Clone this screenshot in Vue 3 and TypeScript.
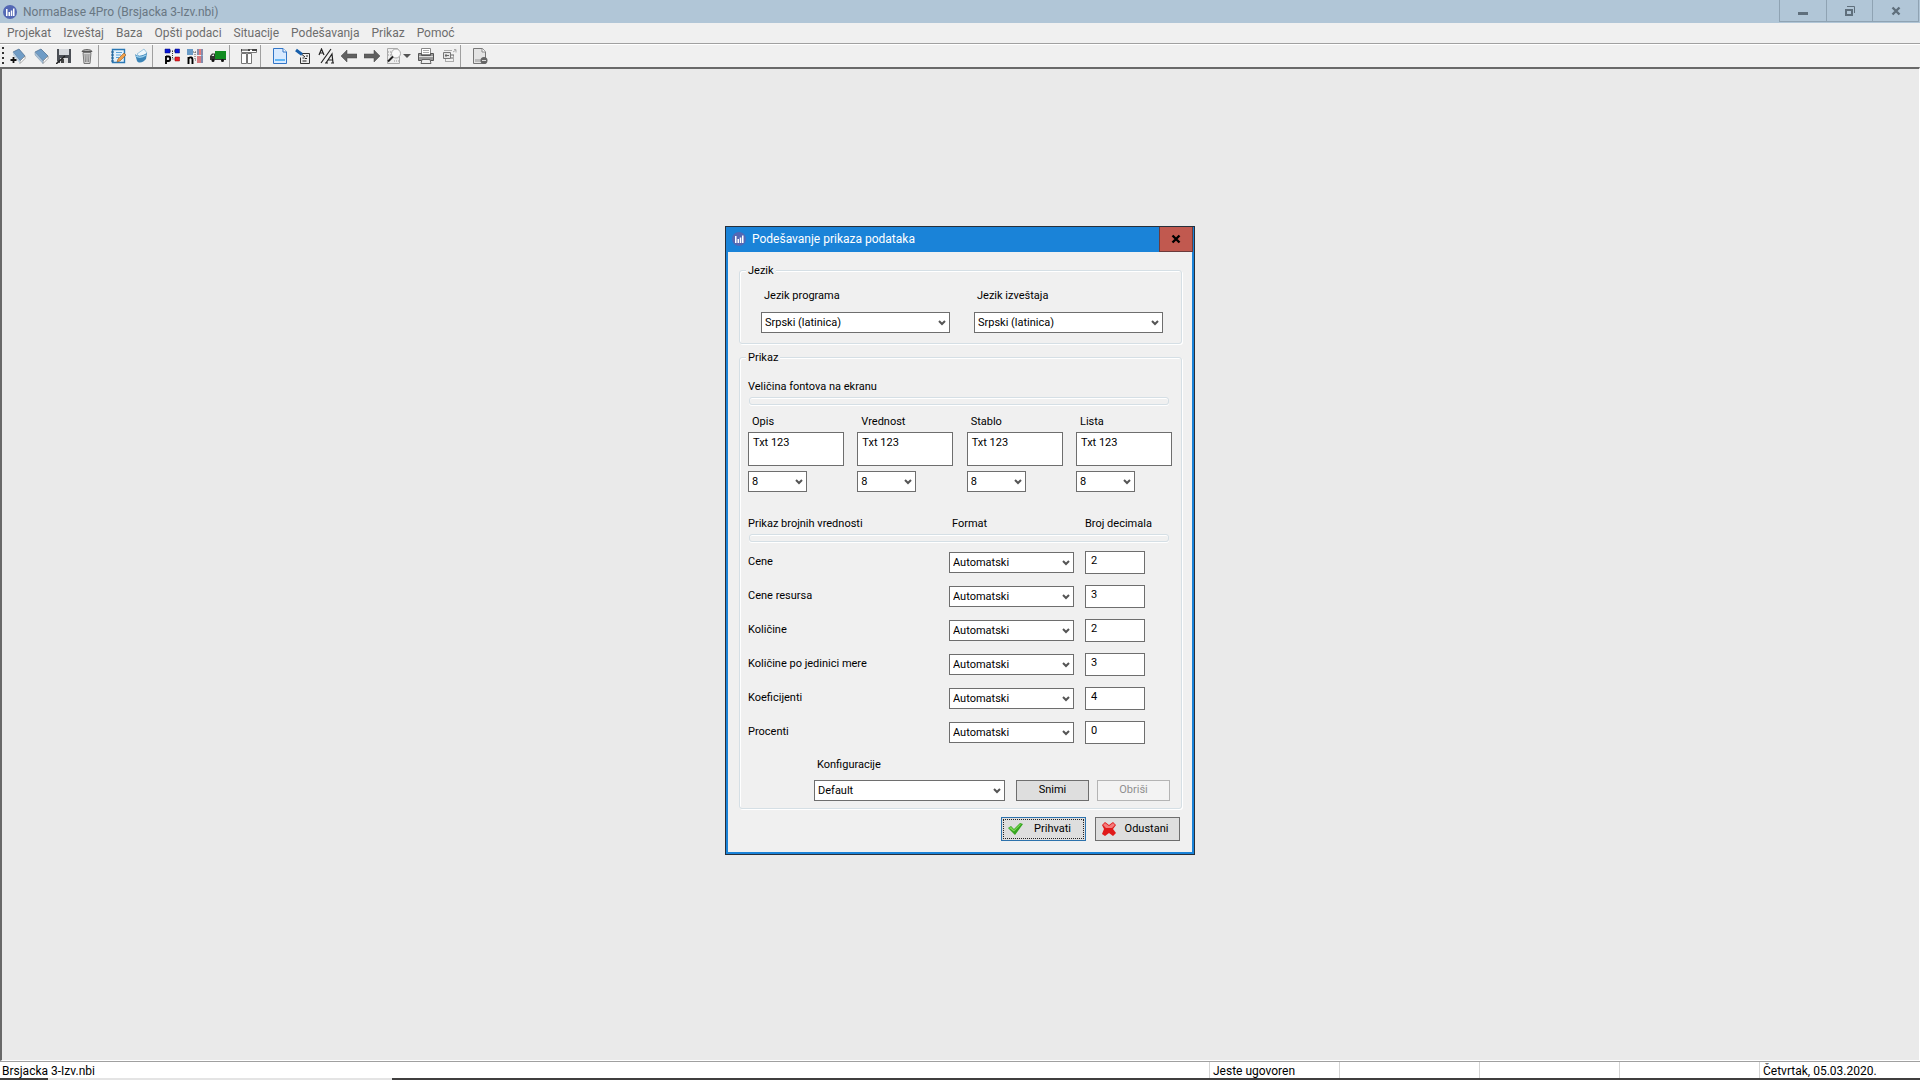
<script setup lang="ts">
import { ref } from 'vue'

interface FontSample { id: string; label: string; text: string; size: string }
interface NumberRow { id: string; label: string; format: string; decimals: string }

const menus: string[] = ['Projekat', 'Izveštaj', 'Baza', 'Opšti podaci', 'Situacije', 'Podešavanja', 'Prikaz', 'Pomoć']

const languages: string[] = ['Srpski (latinica)']
const programLanguage = ref('Srpski (latinica)')
const reportLanguage = ref('Srpski (latinica)')

const fonts = ref<FontSample[]>([
  { id: 'opis', label: 'Opis', text: 'Txt 123', size: '8' },
  { id: 'vrednost', label: 'Vrednost', text: 'Txt 123', size: '8' },
  { id: 'stablo', label: 'Stablo', text: 'Txt 123', size: '8' },
  { id: 'lista', label: 'Lista', text: 'Txt 123', size: '8' },
])

const rows = ref<NumberRow[]>([
  { id: 'cene', label: 'Cene', format: 'Automatski', decimals: '2' },
  { id: 'resursi', label: 'Cene resursa', format: 'Automatski', decimals: '3' },
  { id: 'kolicine', label: 'Količine', format: 'Automatski', decimals: '2' },
  { id: 'jedinica', label: 'Količine po jedinici mere', format: 'Automatski', decimals: '3' },
  { id: 'koeficijenti', label: 'Koeficijenti', format: 'Automatski', decimals: '4' },
  { id: 'procenti', label: 'Procenti', format: 'Automatski', decimals: '0' },
])

const configuration = ref('Default')
</script>

<template>
  <div class="app">
    <header class="titlebar">
      <svg class="logo" viewBox="0 0 14 14"><circle cx="7" cy="7" r="7" fill="#5468b4" /><path d="M3 4h1.500v7H3zM5.500 7H7v4H5.500zM7.800 5.500h1.500V11H7.800zM10 3.500h1.500V11H10z" fill="#fff" /></svg>
      <h1>NormaBase 4Pro (Brsjacka 3-Izv.nbi)</h1>
      <div class="controls">
        <button type="button" aria-label="Minimize"><svg viewBox="0 0 12 12"><path d="M1 7h10v3H1z" fill="#5f6f7c" /></svg></button>
        <button type="button" aria-label="Restore"><svg viewBox="0 0 12 12"><path d="M2 5h6v5H2z" fill="none" stroke="#5f6f7c" stroke-width="2" /><path d="M3 1.500h7.500V8" fill="none" stroke="#5f6f7c" /></svg></button>
        <button type="button" aria-label="Close"><svg viewBox="0 0 12 12"><path d="M2.500 2.500l7 7M9.500 2.500l-7 7" stroke="#5f6f7c" stroke-width="2.400" /></svg></button>
      </div>
    </header>

    <nav class="menubar">
      <a v-for="m in menus" :key="m" href="#">{{ m }}</a>
    </nav>

    <div class="toolbar">
      <span class="grip"></span>
      <button type="button" aria-label="Novi projekat"><svg viewBox="0 0 16 16"><path d="M3 4l6-3 6 7-5 5z" fill="#6f9cc6" stroke="#46698c" stroke-width=".7" /><path d="M10 13l5-5v2.500l-5 5z" fill="#fff" stroke="#777" stroke-width=".6" /><path d="M3 4l7 9v2.500L3 7z" fill="#b9cfe2" /><path d="M3.500 9v6M.5 12h6" stroke="#111" stroke-width="1.800" /></svg></button>
      <button type="button" aria-label="Otvori projekat"><svg viewBox="0 0 16 16"><path d="M2 4l6-3 7 7-5 5z" fill="#6f9cc6" stroke="#46698c" stroke-width=".7" /><path d="M10 13l5-5v2.500l-5 5z" fill="#fff" stroke="#777" stroke-width=".6" /><path d="M2 4l8 9v2.500L2 7z" fill="#a9c3db" stroke="#7890a8" stroke-width=".5" /></svg></button>
      <button type="button" aria-label="Snimi projekat"><svg viewBox="0 0 16 16"><path d="M1 1h14v14H3l-2-2z" fill="#4b4f55" /><path d="M3 1h10v6H3z" fill="#d5d8dc" /><path d="M4 10h8v5H4z" fill="#dedede" /><path d="M5 11h3v4H5z" fill="#444" /><path d="M0 16l9-8" stroke="#222" stroke-width="1.500" /></svg></button>
      <button type="button" aria-label="Obriši projekat"><svg viewBox="0 0 16 16"><path d="M4 4.500h8l-1 11H5z" fill="#d4d4d4" stroke="#777" /><path d="M3 3.500C3.500 1 12.500 1 13 3.500z" fill="#bbb" stroke="#555" /><path d="M6 6l.5 8M8 6v8M10 6l-.5 8" stroke="#888" /></svg></button>
      <span class="sep"></span>
      <button type="button" aria-label="Beleške"><svg viewBox="0 0 16 16"><path d="M2.500 1.500h12v13h-12z" fill="#e3f1fb" stroke="#2a78b5" stroke-width="1.400" /><path d="M1 4h3M1 7h3M1 10h3M1 13h3" stroke="#225d8d" /><path d="M6 4.500h6M6 7h5M6 9.500h3" stroke="#5aa2d8" /><path d="M7 14l1-3 6-6 2 2-6 6z" fill="#f0a04c" stroke="#925b26" stroke-width=".6" /></svg></button>
      <button type="button" aria-label="Baza"><svg viewBox="0 0 16 16"><path d="M4 6l7-5 3 4-6 5z" fill="#eef7fc" stroke="#8bbbd9" stroke-width=".8" /><path d="M2 6c3 3 7 2 12-1l-1 6c-2 3-7 5-9 2z" fill="#3c85b8" /><path d="M3 8c3 2 7 1 10-1" fill="none" stroke="#9bd0ee" stroke-width="1.500" /></svg></button>
      <span class="sep"></span>
      <button type="button" aria-label="Pozicije"><svg viewBox="0 0 16 16"><path d="M1 1h5v4H1zM11 1h4.500v4H11z" fill="#0a18d8" stroke="#050b70" stroke-width=".5" /><path d="M6 3h5M8.500 3v8H11" fill="none" stroke="#333" stroke-dasharray="1 1" /><path d="M11 9h4.500v4H11z" fill="#ed1c24" stroke="#800" stroke-width=".5" /><path d="M2 16V8M2 8.500h2.500a1.500 2 0 0 1 0 4.500H2" fill="none" stroke="#000" stroke-width="1.900" /></svg></button>
      <button type="button" aria-label="Normativi"><svg viewBox="0 0 16 16"><path d="M0 1h6v6H0z" fill="#699bc7" /><path d="M10 1h6v6h-6z" fill="#e77a78" /><path d="M10 8h6v7h-6z" fill="#d77b80" /><path d="M11 1v6M15 1v14" stroke="#6793bd" stroke-width="1.500" /><path d="M6 4h4M8 4v8h2" fill="none" stroke="#555" stroke-dasharray="1 1" /><path d="M1.500 16V9M1.500 10.500c2-2 4-1 4 1V16" fill="none" stroke="#000" stroke-width="1.900" /></svg></button>
      <button type="button" aria-label="Transport"><svg viewBox="0 0 16 16"><path d="M5 3h11v8H5z" fill="#118b20" /><path d="M0 8l2-2.500h3V12H0z" fill="#333" /><path d="M5 11h11v1H5z" fill="#333" /><circle cx="3" cy="12.500" r="1.500" fill="#111" /><circle cx="12.500" cy="12.500" r="1.500" fill="#111" /><path d="M1.500 8L3 6.500h1V8z" fill="#eee" /></svg></button>
      <span class="sep"></span>
      <button type="button" aria-label="Raspored"><svg viewBox="0 0 16 16"><path d="M.5 1.500h15v3H.5zM.5 5.500h5v10h-5zM6.500 5.500h4v10h-4z" fill="#fff" stroke="#777" /><path d="M0 1h9v2H0zM11 1h5v2h-5z" fill="#444" /><path d="M1 2h6" stroke="#ddd" /></svg></button>
      <span class="sep"></span>
      <button type="button" aria-label="Dokument"><svg viewBox="0 0 16 16"><path d="M1.500.5H11L14.500 4v11.500h-13z" fill="#d8eaff" stroke="#3175c7" /><path d="M11 .5V4h3.500" fill="#fff" stroke="#3175c7" /><path d="M3 11h10v2H3z" fill="#61b6f5" /></svg></button>
      <button type="button" aria-label="Izmeni"><svg viewBox="0 0 16 16"><path d="M6.500 5.500h8v10h-9v-6" fill="#eee" stroke="#333" /><path d="M7.500 10h2M7.500 13h4M11 8h2M10 10.500h2" stroke="#222" /><path d="M1 2l6 4.500" stroke="#175eaa" stroke-width="3" /><path d="M7 6.500l3 2.500" stroke="#222" /></svg></button>
      <button type="button" aria-label="Font"><svg viewBox="0 0 16 16"><path d="M1 7l2.500-6L6 7M2 5h3M3 15L13 1M8 15l6-9 1 9M10.500 12H15M7 15h3M13 15h3" fill="none" stroke="#222" stroke-width="1.200" /></svg></button>
      <button type="button" aria-label="Nazad"><svg viewBox="0 0 16 16"><path d="M0 8l6-6v4h10v4H6v4z" fill="#606060" stroke="#444" stroke-width=".5" /></svg></button>
      <button type="button" aria-label="Napred"><svg viewBox="0 0 16 16"><path d="M16 8l-6-6v4H0v4h10v4z" fill="#606060" stroke="#444" stroke-width=".5" /></svg></button>
      <button type="button" class="wide" aria-label="Pregled"><svg viewBox="0 0 16 16"><path d="M1.500.5h10l2 3v12h-12z" fill="#eee" stroke="#aaa" /><path d="M2 4h3M2 7h3M8 13h5" stroke="#999" stroke-dasharray="1 1" /><circle cx="10" cy="5.500" r="4.500" fill="#fafafa" stroke="#aaa" /><path d="M7 8.500L2 13.500" stroke="#222" stroke-width="2" /></svg><svg class="drop" viewBox="0 0 8 4"><path d="M0 0h8L4 4z" fill="#555" /></svg></button>
      <button type="button" aria-label="Štampaj"><svg viewBox="0 0 16 16"><path d="M3.500.5h9v6h-9z" fill="#fff" stroke="#888" /><path d="M5 2.500h6M5 4.500h6" stroke="#aaa" /><path d="M.5 5.500h3v2h9v-2h3v7H.5z" fill="#999" stroke="#555" /><path d="M1 8.500h14" stroke="#ddd" /><path d="M4 11.500h8l1 4H3z" fill="#eee" stroke="#666" /></svg></button>
      <button type="button" aria-label="Izvoz"><svg viewBox="0 0 16 16"><path d="M3 2.500h8M4 13.500h9M12.500 7v6M4.500 11v2M12 4l3-2M13 1.500h2v3" fill="none" stroke="#aaa" /><path d="M2.500 4.500h7v6h-7z" fill="#e4e4e4" stroke="#777" /><path d="M4 7.500h4M5 6v3M10 7h3M10 10h2" stroke="#666" /></svg></button>
      <span class="sep"></span>
      <button type="button" aria-label="Svojstva"><svg viewBox="0 0 16 16"><path d="M1.500.5h9L13.500 4v11.500h-12z" fill="#e4e4e4" stroke="#777" /><path d="M10 .5V4h3.500" fill="#fff" stroke="#888" /><path d="M3 11h8v3H3z" fill="#bbb" /><circle cx="12" cy="12.500" r="3.500" fill="#666" /><path d="M10 12.500h4" stroke="#ddd" /></svg></button>
    </div>

    <main class="workspace"></main>

    <footer class="statusbar">
      <span class="file">Brsjacka 3-Izv.nbi</span>
      <span class="cell state">Jeste ugovoren</span>
      <span class="cell"></span>
      <span class="cell"></span>
      <span class="cell"></span>
      <span class="cell date">Četvrtak, 05.03.2020.</span>
    </footer>
    <div class="edge"><span></span></div>

    <div class="overlay">
      <form class="dialog" role="dialog" aria-labelledby="dialog-title" @submit.prevent>
        <div class="caption">
          <svg class="logo" viewBox="0 0 14 14"><circle cx="7" cy="7" r="7" fill="#5468b4" /><path d="M3 4h1.500v7H3zM5.500 7H7v4H5.500zM7.800 5.500h1.500V11H7.800zM10 3.500h1.500V11H10z" fill="#fff" /></svg>
          <h2 id="dialog-title">Podešavanje prikaza podataka</h2>
          <button type="button" aria-label="Zatvori"><svg viewBox="0 0 10 10"><path d="M1.500 1.500l7 7M8.500 1.500l-7 7" stroke="#000" stroke-width="2.400" /></svg></button>
        </div>

        <div class="body">
          <fieldset class="language">
            <legend>Jezik</legend>
            <div class="field">
              <label for="program-language">Jezik programa</label>
              <span class="combo">
                <select id="program-language" v-model="programLanguage"><option v-for="l in languages" :key="l">{{ l }}</option></select>
                <svg viewBox="0 0 8 6"><path d="M1 1l3 3 3-3" /></svg>
              </span>
            </div>
            <div class="field">
              <label for="report-language">Jezik izveštaja</label>
              <span class="combo">
                <select id="report-language" v-model="reportLanguage"><option v-for="l in languages" :key="l">{{ l }}</option></select>
                <svg viewBox="0 0 8 6"><path d="M1 1l3 3 3-3" /></svg>
              </span>
            </div>
          </fieldset>

          <fieldset class="display">
            <legend>Prikaz</legend>
            <p>Veličina fontova na ekranu</p>
            <div class="rule"></div>

            <div class="fonts">
              <div v-for="f in fonts" :key="f.id" class="font">
                <label :for="f.id">{{ f.label }}</label>
                <textarea :id="f.id" v-model="f.text"></textarea>
                <span class="combo">
                  <select v-model="f.size" :aria-label="f.label"><option>8</option></select>
                  <svg viewBox="0 0 8 6"><path d="M1 1l3 3 3-3" /></svg>
                </span>
              </div>
            </div>

            <div class="numbers head">
              <span>Prikaz brojnih vrednosti</span>
              <span class="format">Format</span>
              <span>Broj decimala</span>
            </div>
            <div class="rule"></div>

            <div class="rows">
              <div v-for="r in rows" :key="r.id" class="numbers">
                <label :for="r.id">{{ r.label }}</label>
                <span class="combo">
                  <select :id="r.id" v-model="r.format"><option>Automatski</option></select>
                  <svg viewBox="0 0 8 6"><path d="M1 1l3 3 3-3" /></svg>
                </span>
                <input v-model="r.decimals" type="text" :aria-label="r.label + ' – broj decimala'">
              </div>
            </div>

            <div class="config">
              <div class="field">
                <label for="configuration">Konfiguracije</label>
                <span class="combo">
                  <select id="configuration" v-model="configuration"><option>Default</option></select>
                  <svg viewBox="0 0 8 6"><path d="M1 1l3 3 3-3" /></svg>
                </span>
              </div>
              <button type="button" class="push">Snimi</button>
              <button type="button" class="push" disabled>Obriši</button>
            </div>
          </fieldset>

          <div class="actions">
            <button type="submit" class="push action default">
              <svg viewBox="0 0 16 16"><path d="M1 7l3-2 3 3 6-6 3 1-8 11z" fill="#35a51f" /><path d="M2 7l2-1 3 3 6-6 1 .5-7 7z" fill="#7ed957" /></svg>
              <span>Prihvati</span>
            </button>
            <button type="button" class="push action">
              <svg viewBox="0 0 16 16"><path d="M1 4l3-3 4 3 4-3 3 3-3 4 3 4-3 3-4-3-4 3-3-2 2-5z" fill="#e01919" /><path d="M2 4l2-2 4 3 4-3 2 2-3 3H5z" fill="#f47b7b" /></svg>
              <span>Odustani</span>
            </button>
          </div>
        </div>
      </form>
    </div>
  </div>
</template>

<style>
body {
  margin: 0;
}
</style>

<style scoped>
.app {
  position: relative;
  display: flex;
  flex-direction: column;
  min-height: 100vh;
  background: #f0f0f0;
  font: 12px/16px Roboto, "Noto Sans", sans-serif;
  color: #000;
}

button, select, input, textarea {
  box-sizing: border-box;
  margin: 0;
  border-radius: 0;
  font: inherit;
  color: inherit;
}

.logo {
  width: 14px;
  height: 14px;
}

.titlebar {
  display: flex;
  align-items: center;
  height: 23px;
  padding-left: 3px;
  background: #b1c6d7;
}

h1, h2, p {
  margin: 0;
  font-size: inherit;
  font-weight: 400;
}

h1 {
  flex: 1;
  padding-left: 6px;
  color: #697783;
}

.controls {
  display: flex;
  align-self: flex-start;
  height: 21px;
  margin-right: 1px;
  border: solid #8fa3b3;
  border-width: 0 1px 1px;
}

.controls button {
  display: grid;
  place-items: center;
  width: 46px;
  padding: 0;
  border: 0;
  background: none;
}

.controls button + button {
  border-left: 1px solid #8fa3b3;
}

.controls svg {
  width: 12px;
  height: 12px;
}

.menubar {
  display: flex;
  gap: 12px;
  height: 20px;
  align-items: center;
  padding-left: 7px;
  border-bottom: 1px solid #a0a0a0;
  box-shadow: 0 1px #fff;
}

.menubar a {
  color: #6d6d6d;
  text-decoration: none;
}

.toolbar {
  display: flex;
  align-items: center;
  height: 23px;
}

.grip {
  width: 2px;
  height: 17px;
  margin: 0 2px;
  background: repeating-linear-gradient(#333 0 2px, transparent 2px 5px);
}

.toolbar button {
  display: flex;
  align-items: center;
  justify-content: center;
  width: 23px;
  height: 22px;
  padding: 0;
  border: 0;
  background: none;
}

.toolbar svg {
  flex: none;
  width: 16px;
  height: 16px;
}

.toolbar .wide {
  width: 31px;
  gap: 1px;
}

.toolbar .drop {
  width: 8px;
  height: 4px;
}

.sep {
  box-sizing: border-box;
  width: 8px;
  height: 22px;
  border-left: 1px solid #a0a0a0;
}

.workspace {
  flex: 1;
  border-style: solid;
  border-width: 2px 1px 1px 2px;
  border-color: #696969 #fff #fff #696969;
  background: #eaeaea;
}

.statusbar {
  display: flex;
  height: 16px;
  border-top: 1px solid #a0a0a0;
  background: #fff;
  line-height: 18px;
}

.file {
  flex: 1;
  padding-left: 2px;
}

.cell {
  box-sizing: border-box;
  width: 140px;
  padding-left: 3px;
  border-left: 1px solid #d4d4d4;
  white-space: nowrap;
}

.state {
  width: 130px;
}

.date {
  width: 161px;
}

.edge {
  height: 2px;
  background: #403f3f;
}

.edge span {
  display: block;
  width: 344px;
  height: 2px;
  margin-left: 48px;
  background: #e4e4e4;
}

.overlay {
  position: absolute;
  inset: 0;
  display: grid;
  place-items: center;
}

.dialog {
  box-sizing: border-box;
  width: 470px;
  border: 1px solid #262f3a;
  background: #f0f0f0;
  font-size: 11px;
  line-height: 14px;
}

.caption {
  display: flex;
  align-items: center;
  height: 25px;
  padding: 0 1px 0 6px;
  background: #1a83d8;
  color: #fff;
  font-size: 12px;
}

.caption h2 {
  flex: 1;
  padding-left: 6px;
}

.caption button {
  display: grid;
  place-items: center;
  width: 34px;
  height: 25px;
  padding: 0;
  border: 1px solid #6b3b3c;
  border-top: 0;
  background: #c1594f;
}

.caption button svg {
  width: 10px;
  height: 10px;
}

.body {
  display: flex;
  flex-direction: column;
  gap: 7px;
  padding: 12px 10px 11px 11px;
  border: 2px solid #1a83d8;
  border-top: 0;
}

fieldset {
  min-width: 0;
  margin: 0;
  border: 1px solid #d5dfe5;
  border-radius: 3px;
  box-shadow: 1px 1px #fff, inset 1px 1px #fff;
}

legend {
  padding: 0 2px;
  background: #f0f0f0;
}

.language {
  display: flex;
  gap: 24px;
  padding: 11px 18px 10px 21px;
}

.language legend {
  margin-left: -15px;
}

.display legend {
  margin-left: -2px;
}

.field {
  display: flex;
  flex-direction: column;
  gap: 9px;
}

.language .field {
  flex: 1;
}

.field label {
  padding-left: 3px;
}

.combo {
  position: relative;
  display: block;
  height: 21px;
}

.combo select {
  display: block;
  width: 100%;
  height: 21px;
  padding: 1px 18px 0 3px;
  border: 1px solid #6e6e6e;
  background: #fff;
  appearance: none;
}

.combo svg {
  position: absolute;
  right: 4px;
  top: 8px;
  width: 8px;
  height: 6px;
  fill: none;
  stroke: #555;
  stroke-width: 2;
  pointer-events: none;
}

.display {
  padding: 15px 9px 7px 8px;
}

.rule {
  box-sizing: border-box;
  height: 8px;
  margin: 3px 3px 0 1px;
  border: 1px solid #d5dfe5;
  border-radius: 3px;
  box-shadow: 0 1px #fff, inset 0 1px #fff;
}

.fonts {
  display: grid;
  grid-template-columns: repeat(4, 96px);
  justify-content: space-between;
  margin-top: 10px;
}

.font label {
  display: block;
  padding-left: 4px;
}

.font textarea {
  display: block;
  width: 100%;
  height: 34px;
  margin: 3px 0 5px;
  padding: 3px 4px;
  border: 1px solid #6e6e6e;
  background: #fff;
  resize: none;
  overflow: hidden;
}

.font .combo {
  width: 59px;
}

.numbers {
  display: grid;
  grid-template-columns: 190px 125px 60px;
  column-gap: 11px;
  align-items: center;
}

.head {
  margin-top: 25px;
  white-space: nowrap;
}

.format {
  padding-left: 3px;
}

.rows {
  display: grid;
  gap: 11px;
  margin-top: 9px;
}

.numbers input {
  height: 23px;
  padding: 0 5px 4px;
  border: 1px solid #6e6e6e;
  background: #fff;
}

.config {
  display: flex;
  align-items: flex-end;
  gap: 8px;
  margin: 14px 2px 0 66px;
}

.config .field {
  flex: 1;
  gap: 8px;
  margin-right: 3px;
}

.push {
  width: 73px;
  height: 21px;
  padding: 0;
  border: 1px solid #6e6e6e;
  background: #dedede;
}

.push:disabled {
  border-color: #b4b4b4;
  background: #f3f3f3;
  color: #8f8f8f;
}

.actions {
  display: flex;
  justify-content: flex-end;
  gap: 9px;
  padding: 1px 2px 0 0;
}

.action {
  display: flex;
  align-items: center;
  width: 85px;
  height: 24px;
  padding: 0 3px 0 5px;
}

.action svg {
  flex: none;
  width: 16px;
  height: 16px;
}

.action span {
  flex: 1;
  text-align: center;
}

.default {
  border-color: #2d72ac;
  outline: 1px dotted #222;
  outline-offset: -3px;
}
</style>
